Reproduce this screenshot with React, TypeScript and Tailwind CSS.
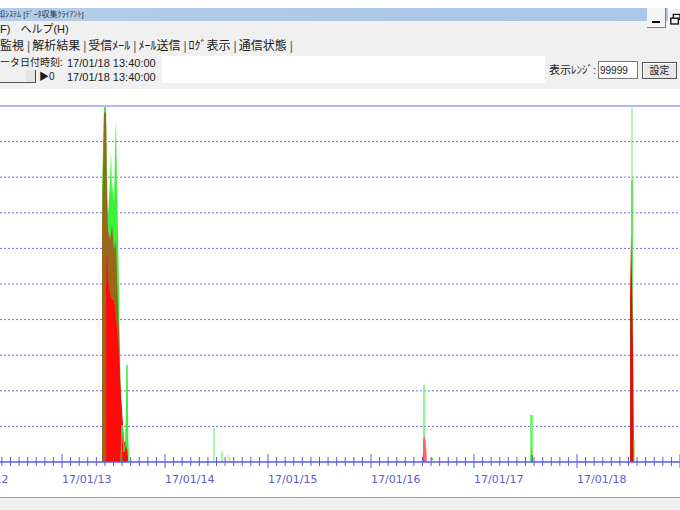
import React from "react";

const jp = { fontFamily: '"Liberation Sans", "Noto Sans CJK JP", sans-serif' };

const TOP = 106;
const AXIS = 462;
const DAY = 103;
const DAY0 = 62;

const gridYs = Array.from({ length: 9 }, (_, i) => TOP + ((AXIS - TOP) / 10) * (i + 1));
const days = ["17/01/12", "17/01/13", "17/01/14", "17/01/15", "17/01/16", "17/01/17", "17/01/18"];

const pts = (a: number[][]) => a.map((p) => p.join(",")).join(" ");

const bigGreen = [
  [102, 462], [102, 190], [104, 107], [106, 107], [107, 170], [108, 215], [110, 180], [111, 150],
  [112, 195], [113, 180], [114, 205], [115, 150], [116, 119], [117, 190], [118, 235], [119, 290],
  [120, 370], [121, 430], [122, 440], [125, 442], [126, 420], [127, 365], [128, 440], [129, 462],
];
const bigBrown = [
  [102, 462], [102, 228], [104, 113], [106, 112], [107, 200], [108, 230], [110, 240], [112, 225],
  [114, 250], [116, 240], [117, 280], [119, 330], [121, 400], [123, 440], [126, 445], [128, 455],
  [128, 462],
];
const bigRed = [
  [106, 462], [106, 290], [107, 250], [108, 280], [110, 295], [112, 300], [114, 300], [116, 320],
  [118, 340], [120, 380], [122, 410], [124, 440], [126, 448], [128, 452], [128, 462],
];

function Chart() {
  const ticks: { x: number; major: boolean }[] = [];
  for (let k = -1; k <= 7; k++) {
    for (let m = 0; m < 12; m++) {
      const x = DAY0 + DAY * k + (DAY / 12) * m;
      if (x >= 0 && x <= 680) ticks.push({ x, major: m === 0 });
    }
  }
  return (
    <svg width={680} height={408} viewBox="0 89 680 408" className="block">
      <rect x={0} y={89} width={680} height={408} fill="#ffffff" />
      <line x1={0} x2={680} y1={TOP} y2={TOP} stroke="#6d6de6" strokeWidth={1.2} />
      {gridYs.map((y) => (
        <line key={y} x1={0} x2={680} y1={y} y2={y} stroke="#6d6de6" strokeWidth={1} strokeDasharray="2 2" />
      ))}

      {/* large cluster 17/01/13 */}
      <polygon points={pts(bigGreen)} fill="#3cf03c" />
      <polygon points={pts(bigBrown)} fill="#9a661c" />
      <polygon points={pts(bigRed)} fill="#ff0a0a" />
      <polyline points="121,462 122,425 124,452 126,440 127,365 128,455" fill="none" stroke="#3cf03c" strokeWidth={1} />

      {/* small spikes */}
      <line x1={214} x2={214} y1={462} y2={428} stroke="#5bf05b" strokeWidth={1} />
      <line x1={222} x2={222} y1={462} y2={452} stroke="#5bf05b" strokeWidth={1.2} />
      <line x1={228} x2={228} y1={462} y2={455} stroke="#8ef08e" strokeWidth={1} />
      <line x1={230} x2={230} y1={462} y2={457} stroke="#f3a07a" strokeWidth={1} />

      <line x1={424} x2={424} y1={462} y2={385} stroke="#6cf06c" strokeWidth={1.5} />
      <polygon points="423,462 423,440 425,435 426,445 427,462" fill="#f46a6a" />
      <polygon points="422,462 423,452 424,462" fill="#8a5a8a" />
      <circle cx={432} cy={459} r={1.2} fill="#3cd83c" />

      <rect x={530} y={415} width={3} height={47} fill="#7cf07c" />
      <line x1={532} x2={532} y1={462} y2={448} stroke="#f08a6a" strokeWidth={1} />
      <rect x={531} y={455} width={2} height={7} fill="#4aa83a" />

      <line x1={632} x2={632} y1={462} y2={108} stroke="#7af27a" strokeWidth={1.2} />
      <line x1={632} x2={632} y1={462} y2={180} stroke="#3ce83c" strokeWidth={1.6} />
      <polygon points="630,462 630,300 631,235 632,280 633,350 634,462" fill="#ff0000" />
      <line x1={630.5} x2={630.5} y1={462} y2={300} stroke="#b0381a" strokeWidth={0.8} />
      <line x1={634} x2={634} y1={462} y2={440} stroke="#3ce83c" strokeWidth={1} />

      {/* axis */}
      <line x1={0} x2={680} y1={AXIS} y2={AXIS} stroke="#5a5ae6" strokeWidth={1.4} />
      {ticks.map((t) => (
        <line
          key={t.x}
          x1={t.x}
          x2={t.x}
          y1={t.major ? AXIS - 8 : AXIS - 5}
          y2={t.major ? AXIS + 6 : AXIS + 4}
          stroke="#5a5ae6"
          strokeWidth={1}
        />
      ))}
      {days.map((d, i) => (
        <text
          key={d}
          x={DAY0 + DAY * (i - 1)}
          y={483}
          fill="#5c5cd0"
          fontSize={11}
          fontFamily='"DejaVu Sans", sans-serif'
        >
          {d}
        </text>
      ))}
    </svg>
  );
}

export default function App() {
  return (
    <div className="relative h-[510px] w-[680px] overflow-hidden bg-[#f0f0f0] text-[#1a1a1a]" style={jp}>
      <div className="h-[8px] bg-white" />
      <div className="flex h-[13px] items-center bg-gradient-to-r from-[#b3cde9] to-[#a9c6e8] text-[8px] leading-none text-[#333]">
        <span className="-ml-[3px] whitespace-nowrap">知ｼｽﾃﾑ [ﾃﾞｰﾀ収集ｸﾗｲｱﾝﾄ]</span>
      </div>

      <div className="absolute right-0 top-[8px] flex gap-[2px]">
        <div className="flex h-[20px] w-[19px] items-end justify-center border-r border-b border-[#808080] bg-[#f4f4f4] pb-[4px]">
          <div className="h-[2px] w-[8px] bg-black" />
        </div>
        <div className="flex h-[20px] w-[12px] items-center border-l border-t border-white bg-[#f4f4f4] pl-[1px]">
          <svg width="12" height="14" viewBox="0 0 12 14">
            <rect x="4" y="1.5" width="8" height="6" fill="none" stroke="#000" strokeWidth="1.5" />
            <rect x="1" y="6" width="9" height="7" fill="#f4f4f4" stroke="#000" strokeWidth="1.5" />
          </svg>
        </div>
      </div>

      <div className="flex h-[16px] items-center gap-[10px] text-[11px]">
        <span>F)</span>
        <span>ヘルプ(H)</span>
      </div>

      <div className="flex h-[17px] items-center whitespace-nowrap text-[12px] leading-none">
        {["監視", "解析結果", "受信ﾒｰﾙ", "ﾒｰﾙ送信", "ﾛｸﾞ表示", "通信状態"].map((t) => (
          <span key={t} className="flex items-center">
            <span>{t}</span>
            <span className="ml-[3px] mr-[2px] text-[#555]">|</span>
          </span>
        ))}
      </div>

      <div className="flex h-[35px] items-start pt-[2px]">
        <div className="flex w-[160px] shrink-0 flex-col whitespace-nowrap text-[11px] leading-[14px]">
          <div className="flex items-center">
            <span className="w-[67px] text-[10px]">ータ日付時刻:</span>
            <span>17/01/18 13:40:00</span>
          </div>
          <div className="flex items-center">
            <div className="flex h-[12px] w-[36px] items-end justify-end border-b border-[#555]">
              <div className="h-[12px] w-[10px] border-r border-[#444] bg-[#e4e4e4]" />
            </div>
            <span className="ml-[3px] w-[28px] text-[10px]">▶0</span>
            <span>17/01/18 13:40:00</span>
          </div>
        </div>
        <div className="ml-[2px] h-[27px] w-[383px] shrink-0 bg-white" />
        <div className="ml-[4px] mt-[5px] flex items-center whitespace-nowrap text-[11px]">
          <span className="w-[49px]">表示ﾚﾝｼﾞ:</span>
          <div className="flex h-[18px] w-[40px] items-center border border-[#7a7a7a] bg-white pl-[1px] text-[10px]">99999</div>
          <div className="ml-[4px] flex h-[17px] w-[35px] items-center justify-center border border-[#555] bg-[#e6e6e6] text-[10px] shadow-[inset_1px_1px_0_#fff]">
            設定
          </div>
        </div>
      </div>

      <Chart />
      <div className="h-px bg-[#a0a0a0]" />
    </div>
  );
}
